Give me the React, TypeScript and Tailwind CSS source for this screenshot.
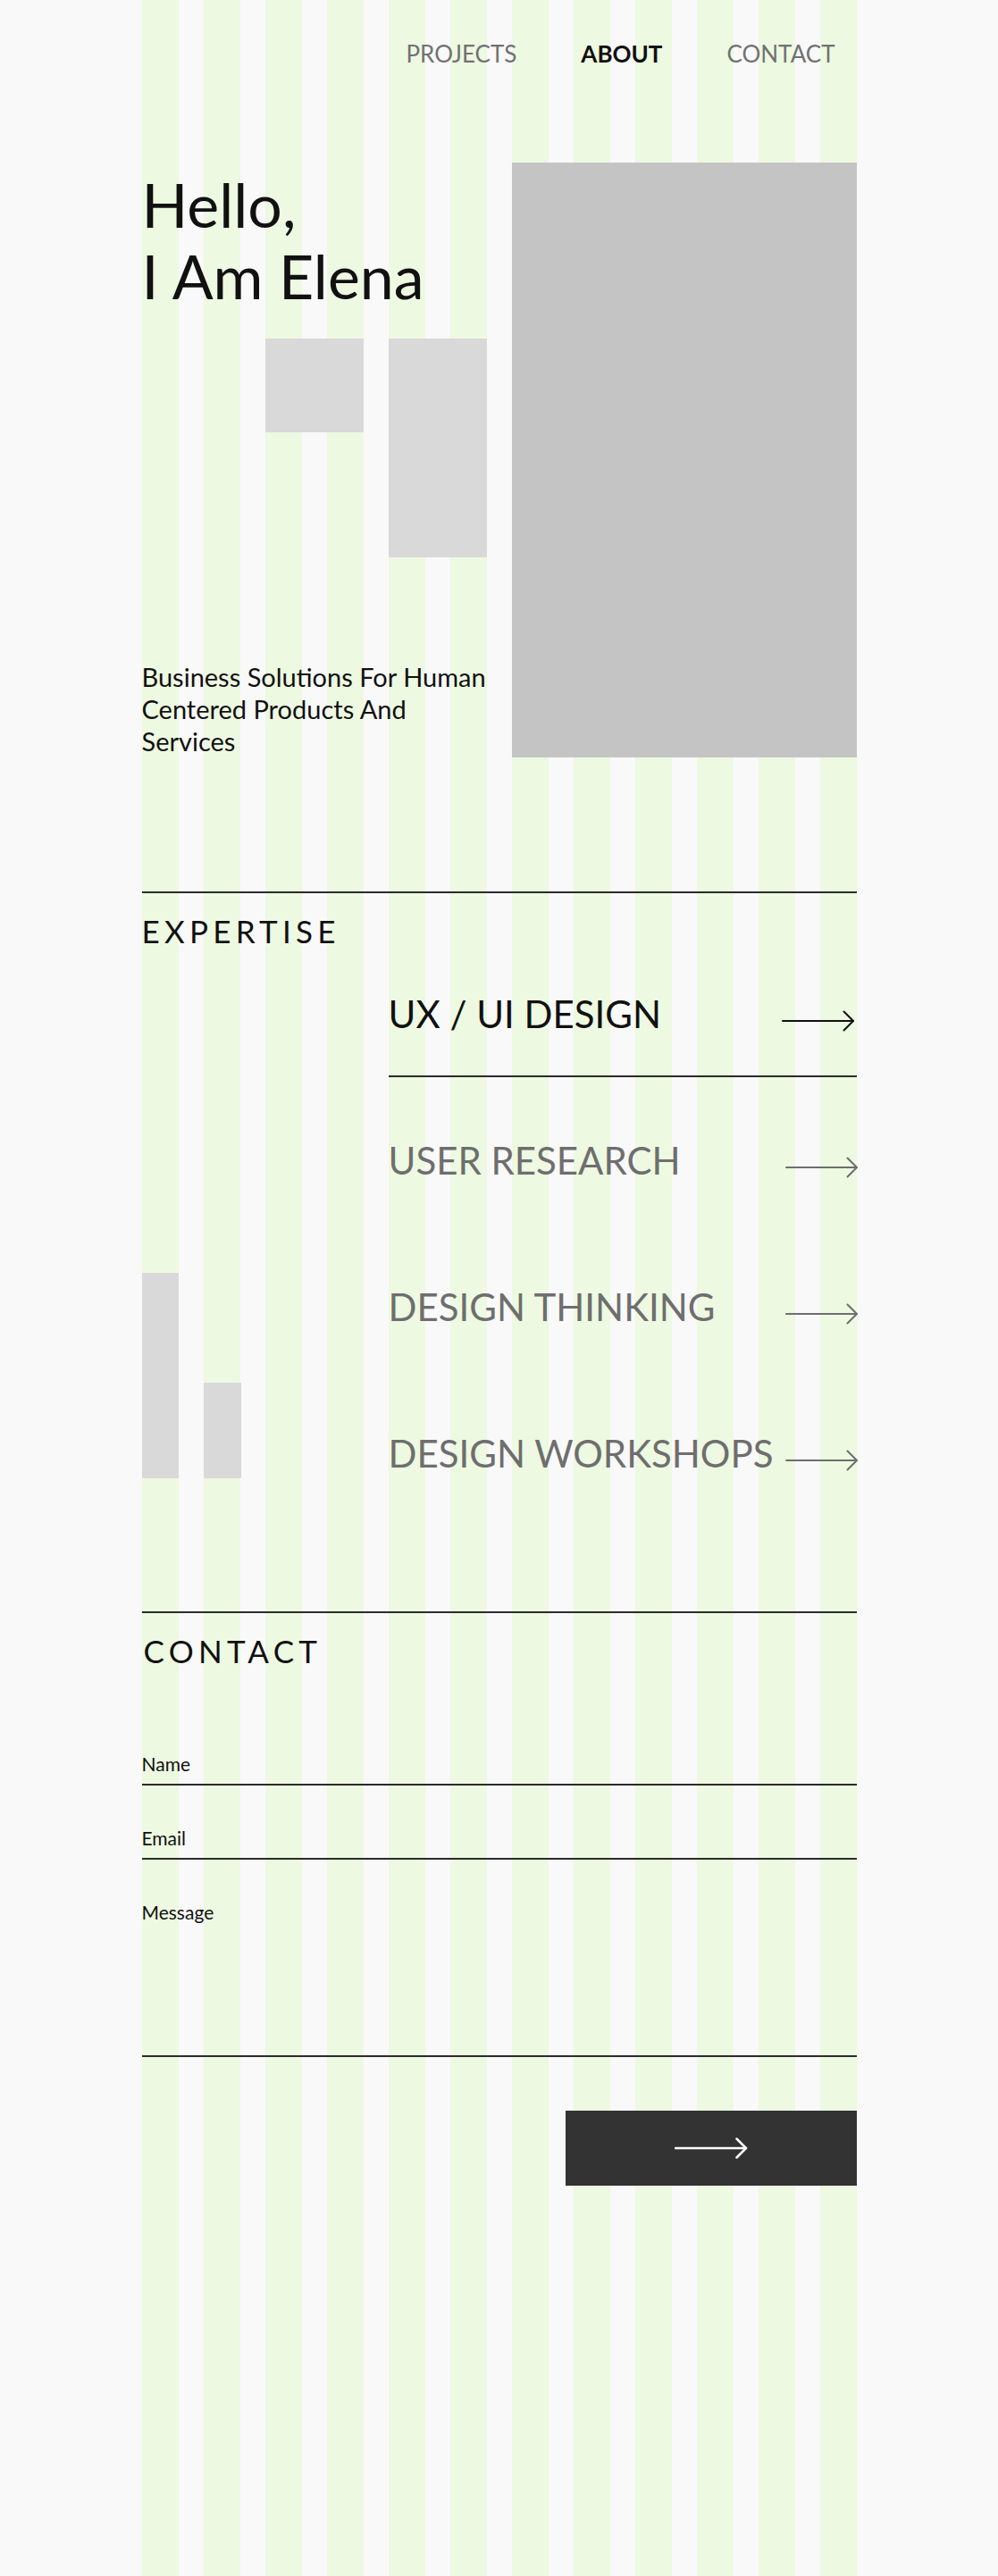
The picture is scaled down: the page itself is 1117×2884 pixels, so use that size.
import React from "react";

function Arrow({ className = "", strokeWidth = 2 }: { className?: string; strokeWidth?: number }) {
  return (
    <svg
      width="82"
      height="24"
      viewBox="0 0 82 24"
      fill="none"
      stroke="currentColor"
      strokeWidth={strokeWidth}
      strokeLinecap="round"
      strokeLinejoin="round"
      className={className}
    >
      <path d="M1 12H80" />
      <path d="M69.5 1.5L80 12L69.5 22.5" />
    </svg>
  );
}

const items = ["UX / UI DESIGN", "USER RESEARCH", "DESIGN THINKING", "DESIGN WORKSHOPS"];

export default function App() {
  return (
    <div className="min-h-[2884px] bg-[#f9f9f9] font-['Lato',sans-serif] text-[#111]">
      <div className="relative mx-auto min-h-[2884px] w-[800px]">
        {/* background column grid */}
        <div aria-hidden className="pointer-events-none absolute inset-0 grid grid-cols-12 gap-x-[28px]">
          {Array.from({ length: 12 }).map((_, i) => (
            <div key={i} className="bg-[#edf9e1]" />
          ))}
        </div>

        <div className="relative">
          {/* Nav */}
          <header className="flex justify-end gap-[72px] pr-[24px] pt-[47px] text-[26px] leading-none">
            <a className="text-[#717171]">PROJECTS</a>
            <a className="font-bold text-[#111]">ABOUT</a>
            <a className="text-[#717171]">CONTACT</a>
          </header>

          {/* Hero */}
          <section className="mt-[109px] grid grid-cols-12 gap-x-[28px]">
            <div className="col-span-6 flex flex-col">
              <h1 className="mt-[7px] text-[68px] font-normal leading-[80px]">
                Hello,
                <br />I Am Elena
              </h1>
              <div className="mt-[30px] grid grid-cols-6 items-start gap-x-[28px]">
                <div className="col-span-2 col-start-3 h-[105px] bg-[#d9d9d9]" />
                <div className="col-span-2 h-[245px] bg-[#d9d9d9]" />
              </div>
              <p className="mt-auto whitespace-nowrap text-[29px] leading-[36px]">
                Business Solutions For Human
                <br />
                Centered Products And
                <br />
                Services
              </p>
            </div>
            <div className="col-span-6 h-[666px] bg-[#c4c4c4]" />
          </section>

          {/* Expertise */}
          <section className="mt-[150px] border-t-2 border-[#2b2b2b]">
            <h2 className="pt-[25px] text-[35px] font-normal leading-none tracking-[0.15em]">EXPERTISE</h2>
            <div className="mt-[51px] grid grid-cols-12 gap-x-[28px]">
              <div className="col-span-4 flex items-end gap-[28px] pb-[112px]">
                <div className="h-[230px] w-[41px] bg-[#d9d9d9]" />
                <div className="h-[107px] w-[42px] bg-[#d9d9d9]" />
              </div>
              <div className="col-span-8">
                {items.map((it, i) => (
                  <div
                    key={it}
                    className={
                      i === 0
                        ? "mb-[69px] border-b-2 border-[#2b2b2b] pb-[45px]"
                        : "mb-[69px] border-b-2 border-transparent pb-[45px]"
                    }
                  >
                    <div className="flex h-[48px] items-center justify-between">
                      <span
                        className={
                          i === 0
                            ? "whitespace-nowrap text-[42px] font-normal leading-[48px] text-[#111]"
                            : "whitespace-nowrap text-[42px] font-normal leading-[48px] text-[#6e6e6e]"
                        }
                      >
                        {it}
                      </span>
                      <Arrow
                        className={
                          i === 0 ? "mr-[2px] mt-4 shrink-0 text-[#111]" : "-mr-[2px] mt-4 shrink-0 text-[#6e6e6e]"
                        }
                      />
                    </div>
                  </div>
                ))}
              </div>
            </div>
          </section>

          {/* Contact */}
          <section className="mt-[37px] border-t-2 border-[#2b2b2b]">
            <h2 className="pl-[2px] pt-[25px] text-[35px] font-normal leading-none tracking-[0.15em]">CONTACT</h2>
            <form className="mt-[50px]">
              <div className="border-b-2 border-[#2b2b2b] pb-[12px] pt-[49px]">
                <label className="block text-[21px] leading-[20px]">Name</label>
              </div>
              <div className="border-b-2 border-[#2b2b2b] pb-[12px] pt-[49px]">
                <label className="block text-[21px] leading-[20px]">Email</label>
              </div>
              <div className="border-b-2 border-[#2b2b2b] pb-[150px] pt-[49px]">
                <label className="block text-[21px] leading-[20px]">Message</label>
              </div>
              <div className="mt-[60px] flex justify-end">
                <button
                  type="button"
                  className="flex h-[84px] w-[326px] items-center justify-center bg-[#333333] text-white"
                >
                  <Arrow strokeWidth={2.5} />
                </button>
              </div>
            </form>
          </section>
        </div>
      </div>
    </div>
  );
}
